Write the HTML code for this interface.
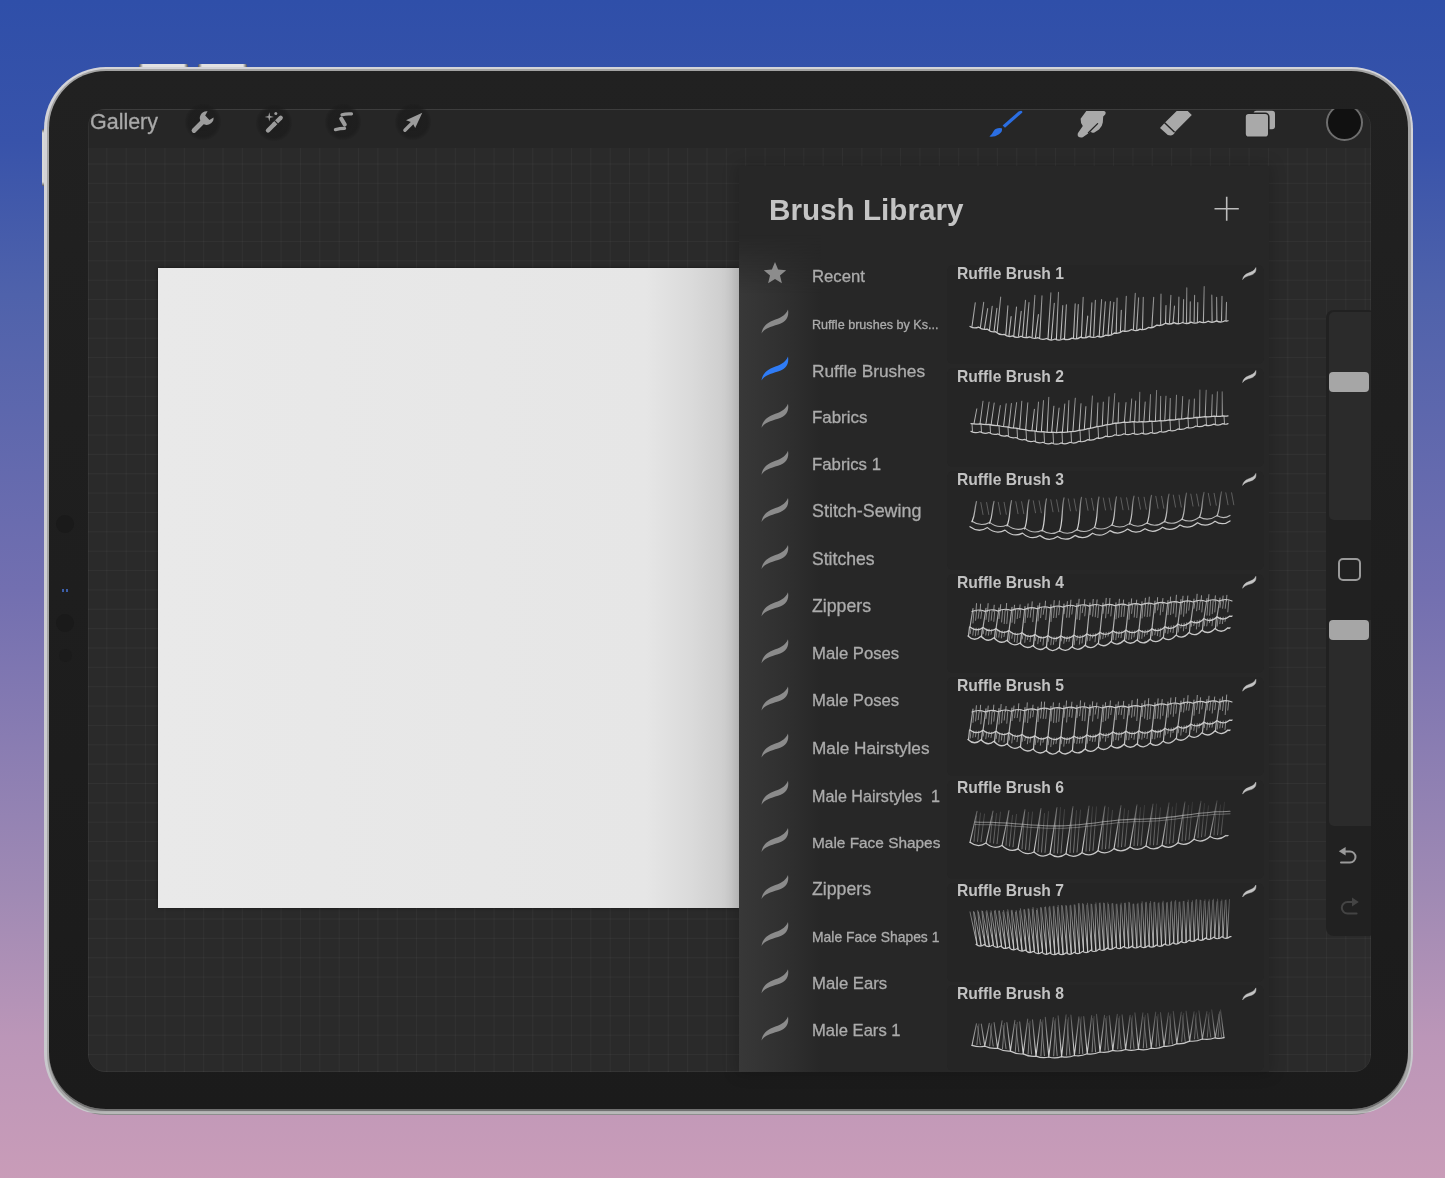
<!DOCTYPE html>
<html><head><meta charset="utf-8">
<style>
*{margin:0;padding:0;box-sizing:border-box}
html,body{width:1445px;height:1178px;overflow:hidden}
body{position:relative;font-family:"Liberation Sans",sans-serif;
background:linear-gradient(180deg,#2f4fa9 0%,#3853aa 12%,#4f62ab 25%,#726fb0 50%,#a08ab4 76%,#bb96b8 88%,#c99cb8 100%);}
.abs{position:absolute}
#frame{position:absolute;left:43.7px;top:66.5px;width:1369px;height:1048.5px;border-radius:62px;background:linear-gradient(180deg,#d4d4d8 0,#c8c8cc calc(100% - 3px),#8e8e8e calc(100% - 1.6px))}
#frame2{position:absolute;left:46.5px;top:69px;width:1364px;height:1044.5px;border-radius:59.5px;background:linear-gradient(180deg,#a3a3a3 0,#a6a6a6 calc(100% - 3px),#b8b8b8 calc(100% - 2px))}
#bezel{position:absolute;left:48.8px;top:71px;width:1359.4px;height:1038px;border-radius:57px;background:linear-gradient(180deg,#212121,#1b1b1b);box-shadow:0 2px 0 #707070}
#screen{position:absolute;left:87.7px;top:109px;width:1283px;height:963px;border-radius:17px;overflow:hidden;
background-color:#2a2a2a;
background-image:linear-gradient(90deg,rgba(255,255,255,0.035) 1.3px,transparent 1.3px),linear-gradient(180deg,rgba(255,255,255,0.035) 1.3px,transparent 1.3px);
background-size:19.37px 19.36px;background-position:-1px 15.8px}
#toolbar{position:absolute;left:0;top:0;width:1283px;height:39px;background:#262626;border-top:1px solid #333}
.ct{position:absolute;left:812px;line-height:1;color:#acacac;white-space:nowrap;will-change:transform;-webkit-text-stroke:0.3px #acacac}
.bt{position:absolute;left:957px;line-height:1;color:#c2c2c2;white-space:nowrap;font-size:15.66px;font-weight:bold;will-change:transform}
</style></head><body>
<div class="abs" style="left:138.9px;top:64.2px;width:49.4px;height:3.5px;border-radius:1.5px;background:linear-gradient(90deg,#555 0,#e2e2e2 4px,#e2e2e2 calc(100% - 4px),#555 100%)"></div>
<div class="abs" style="left:198px;top:64.2px;width:49px;height:3.5px;border-radius:1.5px;background:linear-gradient(90deg,#555 0,#e2e2e2 4px,#e2e2e2 calc(100% - 4px),#555 100%)"></div>
<div class="abs" style="left:41.9px;top:128.7px;width:3px;height:57.7px;border-radius:1.5px;background:linear-gradient(180deg,#555 0,#d8d8d8 4px,#d8d8d8 calc(100% - 4px),#555 100%)"></div>
<div id="frame"></div>
<div id="frame2"></div>
<div id="bezel"></div>
<div class="abs" style="left:56px;top:515px;width:18px;height:18px;border-radius:50%;background:#1a1a1a"></div>
<div class="abs" style="left:56px;top:614px;width:18px;height:18px;border-radius:50%;background:#1a1a1a"></div>
<div class="abs" style="left:58.5px;top:649px;width:13px;height:13px;border-radius:50%;background:#1b1b1b"></div>
<div class="abs" style="left:62px;top:588.5px;width:2px;height:3px;background:#3c5ea8"></div>
<div class="abs" style="left:65.5px;top:588.5px;width:2px;height:3px;background:#3c5ea8"></div>
<div id="screen">
  <div id="toolbar"></div>
  <div class="abs" style="left:0;top:0;width:1283px;height:963px;border-radius:16px;box-shadow:inset 0 0 0 1px rgba(255,255,255,0.05)"></div>
  <div class="abs" style="left:1238px;top:-5px;width:37px;height:37px;border-radius:50%;background:#111;border:2px solid #6e6e6e"></div>
  <!-- sidebar -->
  <div class="abs" style="left:1238px;top:201px;width:50px;height:626px;border-radius:8px;background:#212121"></div>
  <div class="abs" style="left:1241px;top:203px;width:48px;height:208px;border-radius:5px;background:#2b2b2b"></div>
  <div class="abs" style="left:1241px;top:511px;width:48px;height:206px;border-radius:5px;background:#2b2b2b"></div>
  <div class="abs" style="left:1241px;top:263px;width:40px;height:20px;border-radius:4px;background:#a6a6a6"></div>
  <div class="abs" style="left:1241px;top:511px;width:40px;height:20px;border-radius:4px;background:#a6a6a6"></div>
  <div class="abs" style="left:1250px;top:449px;width:23px;height:23px;border-radius:5px;border:2px solid #9a9a9a"></div>
</div>
<div class="abs" style="left:90px;top:111.5px;font-size:21.47px;color:#a9a9a9;line-height:1;will-change:transform;-webkit-text-stroke:0.3px #a9a9a9">Gallery</div>
<!-- canvas -->
<div class="abs" style="left:158px;top:268px;width:581px;height:640px;background:linear-gradient(90deg,#e9e9e9 0%,#e6e6e6 84%,#dadada 92%,#cdcdcd 98%,#c8c8c8 100%);box-shadow:0 0 3px rgba(0,0,0,0.5)"></div>
<!-- panel -->
<div class="abs" style="left:739px;top:166px;width:530px;height:906px;background:#272727;box-shadow:0 0 14px 2px rgba(0,0,0,0.18)"></div>
<div class="abs" style="left:739px;top:235px;width:82px;height:837px;background:linear-gradient(90deg,#383838,#2f2f2f 60%,#272727);-webkit-mask-image:linear-gradient(180deg,transparent 0,#000 60px)"></div>
<div class="abs" style="left:769px;top:194.5px;font-size:29.66px;font-weight:bold;color:#c4c4c4;line-height:1;will-change:transform">Brush Library</div>
<div class="abs" style="left:947px;top:265.1px;width:317px;height:99.0px;border-radius:6px;background:#252525"></div><div class="abs" style="left:947px;top:368.0px;width:317px;height:99.0px;border-radius:6px;background:#252525"></div><div class="abs" style="left:947px;top:470.9px;width:317px;height:99.0px;border-radius:6px;background:#252525"></div><div class="abs" style="left:947px;top:573.8px;width:317px;height:99.0px;border-radius:6px;background:#252525"></div><div class="abs" style="left:947px;top:676.7px;width:317px;height:99.0px;border-radius:6px;background:#252525"></div><div class="abs" style="left:947px;top:779.6px;width:317px;height:99.0px;border-radius:6px;background:#252525"></div><div class="abs" style="left:947px;top:882.5px;width:317px;height:99.0px;border-radius:6px;background:#252525"></div><div class="abs" style="left:947px;top:985.4px;width:317px;height:85.6px;border-radius:6px;background:#252525"></div>
<div class="ct" style="top:268.7px;font-size:16.7px">Recent</div>
<div class="ct" style="top:319.4px;font-size:12.6px">Ruffle brushes by Ks...</div>
<div class="ct" style="top:362.5px;font-size:17.3px">Ruffle Brushes</div>
<div class="ct" style="top:410.0px;font-size:16.9px">Fabrics</div>
<div class="ct" style="top:457.2px;font-size:16.8px">Fabrics 1</div>
<div class="ct" style="top:503.4px;font-size:17.9px">Stitch-Sewing</div>
<div class="ct" style="top:550.8px;font-size:17.6px">Stitches</div>
<div class="ct" style="top:597.8px;font-size:17.7px">Zippers</div>
<div class="ct" style="top:645.8px;font-size:16.7px">Male Poses</div>
<div class="ct" style="top:692.9px;font-size:16.7px">Male Poses</div>
<div class="ct" style="top:739.6px;font-size:17.2px">Male Hairstyles</div>
<div class="ct" style="top:787.7px;font-size:16.1px">Male Hairstyles&nbsp;&nbsp;1</div>
<div class="ct" style="top:835.4px;font-size:15.4px">Male Face Shapes</div>
<div class="ct" style="top:880.6px;font-size:17.7px">Zippers</div>
<div class="ct" style="top:930.9px;font-size:13.9px">Male Face Shapes 1</div>
<div class="ct" style="top:975.7px;font-size:16.7px">Male Ears</div>
<div class="ct" style="top:1022.9px;font-size:16.6px">Male Ears 1</div>
<div class="bt" style="top:265.9px">Ruffle Brush 1</div>
<div class="bt" style="top:368.8px">Ruffle Brush 2</div>
<div class="bt" style="top:471.7px">Ruffle Brush 3</div>
<div class="bt" style="top:574.6px">Ruffle Brush 4</div>
<div class="bt" style="top:677.5px">Ruffle Brush 5</div>
<div class="bt" style="top:780.4px">Ruffle Brush 6</div>
<div class="bt" style="top:883.3px">Ruffle Brush 7</div>
<div class="bt" style="top:986.2px">Ruffle Brush 8</div>
<svg class="abs" style="left:0;top:0" width="1445" height="1178" viewBox="0 0 1445 1178"><defs><radialGradient id="halo"><stop offset="0" stop-color="#1d1d1d" stop-opacity="0.85"/><stop offset="0.78" stop-color="#1d1d1d" stop-opacity="0.8"/><stop offset="1" stop-color="#1a1a1a" stop-opacity="0"/></radialGradient></defs><circle cx="203" cy="122" r="18.5" fill="url(#halo)"/><circle cx="274" cy="123" r="18.5" fill="url(#halo)"/><circle cx="343" cy="122" r="18.5" fill="url(#halo)"/><circle cx="413" cy="122" r="18.5" fill="url(#halo)"/><g fill="#9c9c9c"><path d="M194,130.5 L203,121.5" stroke="#9c9c9c" stroke-width="4.8" stroke-linecap="round"/><path d="M207.6,111.2 L205.2,115.6 L209.4,120 L213.6,117.6 A6.9,6.9 0 0 1 201.6,122.6 A6.9,6.9 0 0 1 207.6,111.2 Z"/></g><g fill="#9c9c9c"><path d="M268,130.5 L274.2,124.3" stroke="#9c9c9c" stroke-width="4.4" stroke-linecap="round"/><path d="M274.2,124.3 L280.7,117.8" stroke="#9c9c9c" stroke-width="4.4" stroke-linecap="round"/><path d="M273.4,119.4 L277.8,123.8" stroke="#262626" stroke-width="1.2"/><path d="M269.3,112.3 L270.2,116 L273.9,116.9 L270.2,117.8 L269.3,121.5 L268.4,117.8 L264.7,116.9 L268.4,116 Z"/><circle cx="275.8" cy="113.6" r="1.5"/></g><g stroke="#9c9c9c" stroke-linecap="round" fill="none"><path d="M342,114.8 Q346,113.5 351.5,113.9" stroke-width="3.2"/><path d="M341.2,118.6 L344.8,124.6" stroke-width="4"/><path d="M335.5,129.6 Q340,128.5 344.5,128.4" stroke-width="3.4"/></g><g fill="#9c9c9c"><path d="M422.3,112.7 L406,120.2 L412.3,122.6 L415.2,127.9 Z"/><path d="M404.9,130.3 L413.2,122" stroke="#9c9c9c" stroke-width="3.4" stroke-linecap="round"/></g><g fill="#2b6ee2"><path d="M1002.6,125.6 L1018.6,111.6 Q1022.6,109.6 1022.4,112.6 L1005,127.8 Z"/><path d="M1001.8,128.2 Q1003,131.5 999,134.2 Q994.5,137.2 989.4,136.6 Q992.6,133.6 993.8,130.8 Q996,127.4 1001.8,128.2 Z"/></g><path fill="#a9a9a9" d="M1086.3,111 L1104,111 Q1106.6,111.6 1105.2,114.4 L1103.2,116.6 L1102.8,122.6 Q1102.2,127 1099,129.6 L1094.4,132.4 Q1091.4,133.4 1091,131.4 L1082.8,137.2 Q1078.2,138 1077.6,135.2 Q1077.4,133 1079,131.4 L1082.8,126 Q1080.4,123 1080.6,118.8 Z"/><path d="M1097.6,123.6 L1088.4,132.8" stroke="#232323" stroke-width="1.3" stroke-linecap="round"/><path fill="#a9a9a9" d="M1176.7,111 L1187.7,111 L1191.8,115.1 L1175.4,131.6 Q1173.6,135.6 1170.4,135.6 Q1167.6,135.6 1165.6,133 L1160,127.9 L1165,122.6 Z"/><path d="M1164.4,122.4 L1174.6,132.2" stroke="#232323" stroke-width="1.4"/><rect x="1253.5" y="110.8" width="21.5" height="18.4" rx="3" fill="#a9a9a9"/><rect x="1245" y="113.2" width="23.8" height="24.1" rx="3.6" fill="#a9a9a9" stroke="#232323" stroke-width="1.6"/><g fill="none" stroke-linecap="round" stroke-width="2"><path d="M1345,851.5 L1350,851.5 A5.5,5.5 0 0 1 1350,862.5 L1341,862.5" stroke="#9a9a9a"/><path d="M1352.6,902 L1347.6,902 A5.8,5.8 0 0 0 1347.6,913.6 L1356.6,913.6" stroke="#444"/></g><path d="M1338.8,851.2 L1345.6,847 L1345.6,855.6 Z" fill="#9a9a9a"/><path d="M1358.8,902 L1352,897.6 L1352,906.4 Z" fill="#444"/><path d="M1214.5,208.8 L1238.8,208.8 M1226.7,196.8 L1226.7,220.8" stroke="#bcbcbc" stroke-width="1.6"/><path transform="translate(763,261.6)" d="M12,0.5 L15.1,8 L23.2,8.6 L17,13.8 L18.9,21.7 L12,17.4 L5.1,21.7 L7,13.8 L0.8,8.6 L8.9,8 Z" fill="#8c8c8c"/><path transform="translate(761.5,309.4)" d="M0,24 C1,17.5 5,13.5 11.5,11 C18,8.5 24,6.5 26.5,0 C27.8,7.5 24.5,12.5 16.5,15 C9,17.2 3,19 0,24 Z" fill="#8b8b8b"/><path transform="translate(761.5,356.6)" d="M0,24 C1,17.5 5,13.5 11.5,11 C18,8.5 24,6.5 26.5,0 C27.8,7.5 24.5,12.5 16.5,15 C9,17.2 3,19 0,24 Z" fill="#2f7cf6"/><path transform="translate(761.5,403.7)" d="M0,24 C1,17.5 5,13.5 11.5,11 C18,8.5 24,6.5 26.5,0 C27.8,7.5 24.5,12.5 16.5,15 C9,17.2 3,19 0,24 Z" fill="#8b8b8b"/><path transform="translate(761.5,450.8)" d="M0,24 C1,17.5 5,13.5 11.5,11 C18,8.5 24,6.5 26.5,0 C27.8,7.5 24.5,12.5 16.5,15 C9,17.2 3,19 0,24 Z" fill="#8b8b8b"/><path transform="translate(761.5,497.9)" d="M0,24 C1,17.5 5,13.5 11.5,11 C18,8.5 24,6.5 26.5,0 C27.8,7.5 24.5,12.5 16.5,15 C9,17.2 3,19 0,24 Z" fill="#8b8b8b"/><path transform="translate(761.5,545.1)" d="M0,24 C1,17.5 5,13.5 11.5,11 C18,8.5 24,6.5 26.5,0 C27.8,7.5 24.5,12.5 16.5,15 C9,17.2 3,19 0,24 Z" fill="#8b8b8b"/><path transform="translate(761.5,592.2)" d="M0,24 C1,17.5 5,13.5 11.5,11 C18,8.5 24,6.5 26.5,0 C27.8,7.5 24.5,12.5 16.5,15 C9,17.2 3,19 0,24 Z" fill="#8b8b8b"/><path transform="translate(761.5,639.3)" d="M0,24 C1,17.5 5,13.5 11.5,11 C18,8.5 24,6.5 26.5,0 C27.8,7.5 24.5,12.5 16.5,15 C9,17.2 3,19 0,24 Z" fill="#8b8b8b"/><path transform="translate(761.5,686.5)" d="M0,24 C1,17.5 5,13.5 11.5,11 C18,8.5 24,6.5 26.5,0 C27.8,7.5 24.5,12.5 16.5,15 C9,17.2 3,19 0,24 Z" fill="#8b8b8b"/><path transform="translate(761.5,733.6)" d="M0,24 C1,17.5 5,13.5 11.5,11 C18,8.5 24,6.5 26.5,0 C27.8,7.5 24.5,12.5 16.5,15 C9,17.2 3,19 0,24 Z" fill="#8b8b8b"/><path transform="translate(761.5,780.7)" d="M0,24 C1,17.5 5,13.5 11.5,11 C18,8.5 24,6.5 26.5,0 C27.8,7.5 24.5,12.5 16.5,15 C9,17.2 3,19 0,24 Z" fill="#8b8b8b"/><path transform="translate(761.5,827.9)" d="M0,24 C1,17.5 5,13.5 11.5,11 C18,8.5 24,6.5 26.5,0 C27.8,7.5 24.5,12.5 16.5,15 C9,17.2 3,19 0,24 Z" fill="#8b8b8b"/><path transform="translate(761.5,875.0)" d="M0,24 C1,17.5 5,13.5 11.5,11 C18,8.5 24,6.5 26.5,0 C27.8,7.5 24.5,12.5 16.5,15 C9,17.2 3,19 0,24 Z" fill="#8b8b8b"/><path transform="translate(761.5,922.1)" d="M0,24 C1,17.5 5,13.5 11.5,11 C18,8.5 24,6.5 26.5,0 C27.8,7.5 24.5,12.5 16.5,15 C9,17.2 3,19 0,24 Z" fill="#8b8b8b"/><path transform="translate(761.5,969.3)" d="M0,24 C1,17.5 5,13.5 11.5,11 C18,8.5 24,6.5 26.5,0 C27.8,7.5 24.5,12.5 16.5,15 C9,17.2 3,19 0,24 Z" fill="#8b8b8b"/><path transform="translate(761.5,1016.4)" d="M0,24 C1,17.5 5,13.5 11.5,11 C18,8.5 24,6.5 26.5,0 C27.8,7.5 24.5,12.5 16.5,15 C9,17.2 3,19 0,24 Z" fill="#8b8b8b"/><path transform="translate(1242.6,267.6) scale(0.5)" d="M0,24 C1,17.5 5,13.5 11.5,11 C18,8.5 24,6.5 26.5,0 C27.8,7.5 24.5,12.5 16.5,15 C9,17.2 3,19 0,24 Z" fill="#c4c4c4" stroke="#c4c4c4" stroke-width="0.9"/><path transform="translate(1242.6,370.5) scale(0.5)" d="M0,24 C1,17.5 5,13.5 11.5,11 C18,8.5 24,6.5 26.5,0 C27.8,7.5 24.5,12.5 16.5,15 C9,17.2 3,19 0,24 Z" fill="#c4c4c4" stroke="#c4c4c4" stroke-width="0.9"/><path transform="translate(1242.6,473.4) scale(0.5)" d="M0,24 C1,17.5 5,13.5 11.5,11 C18,8.5 24,6.5 26.5,0 C27.8,7.5 24.5,12.5 16.5,15 C9,17.2 3,19 0,24 Z" fill="#c4c4c4" stroke="#c4c4c4" stroke-width="0.9"/><path transform="translate(1242.6,576.3) scale(0.5)" d="M0,24 C1,17.5 5,13.5 11.5,11 C18,8.5 24,6.5 26.5,0 C27.8,7.5 24.5,12.5 16.5,15 C9,17.2 3,19 0,24 Z" fill="#c4c4c4" stroke="#c4c4c4" stroke-width="0.9"/><path transform="translate(1242.6,679.2) scale(0.5)" d="M0,24 C1,17.5 5,13.5 11.5,11 C18,8.5 24,6.5 26.5,0 C27.8,7.5 24.5,12.5 16.5,15 C9,17.2 3,19 0,24 Z" fill="#c4c4c4" stroke="#c4c4c4" stroke-width="0.9"/><path transform="translate(1242.6,782.1) scale(0.5)" d="M0,24 C1,17.5 5,13.5 11.5,11 C18,8.5 24,6.5 26.5,0 C27.8,7.5 24.5,12.5 16.5,15 C9,17.2 3,19 0,24 Z" fill="#c4c4c4" stroke="#c4c4c4" stroke-width="0.9"/><path transform="translate(1242.6,885.0) scale(0.5)" d="M0,24 C1,17.5 5,13.5 11.5,11 C18,8.5 24,6.5 26.5,0 C27.8,7.5 24.5,12.5 16.5,15 C9,17.2 3,19 0,24 Z" fill="#c4c4c4" stroke="#c4c4c4" stroke-width="0.9"/><path transform="translate(1242.6,987.9) scale(0.5)" d="M0,24 C1,17.5 5,13.5 11.5,11 C18,8.5 24,6.5 26.5,0 C27.8,7.5 24.5,12.5 16.5,15 C9,17.2 3,19 0,24 Z" fill="#c4c4c4" stroke="#c4c4c4" stroke-width="0.9"/><defs><linearGradient id="g1" gradientUnits="userSpaceOnUse" x1="0" y1="286.0" x2="0" y2="340.0"><stop offset="0" stop-color="#cfcfcf" stop-opacity="0.5"/><stop offset="1" stop-color="#cfcfcf" stop-opacity="1"/></linearGradient><linearGradient id="g2" gradientUnits="userSpaceOnUse" x1="0" y1="388.0" x2="0" y2="430.0"><stop offset="0" stop-color="#cfcfcf" stop-opacity="0.45"/><stop offset="1" stop-color="#cfcfcf" stop-opacity="1"/></linearGradient><linearGradient id="g3" gradientUnits="userSpaceOnUse" x1="0" y1="490.0" x2="0" y2="520.0"><stop offset="0" stop-color="#cfcfcf" stop-opacity="0.25"/><stop offset="1" stop-color="#cfcfcf" stop-opacity="1"/></linearGradient><linearGradient id="g4" gradientUnits="userSpaceOnUse" x1="0" y1="597.0" x2="0" y2="647.5"><stop offset="0" stop-color="#cfcfcf" stop-opacity="0.6"/><stop offset="1" stop-color="#cfcfcf" stop-opacity="1"/></linearGradient><linearGradient id="g5" gradientUnits="userSpaceOnUse" x1="0" y1="698.0" x2="0" y2="751.0"><stop offset="0" stop-color="#cfcfcf" stop-opacity="0.6"/><stop offset="1" stop-color="#cfcfcf" stop-opacity="1"/></linearGradient><linearGradient id="g6" gradientUnits="userSpaceOnUse" x1="0" y1="800.0" x2="0" y2="850.0"><stop offset="0" stop-color="#cfcfcf" stop-opacity="0.15"/><stop offset="1" stop-color="#cfcfcf" stop-opacity="1"/></linearGradient><linearGradient id="g7" gradientUnits="userSpaceOnUse" x1="0" y1="898.0" x2="0" y2="950.0"><stop offset="0" stop-color="#cfcfcf" stop-opacity="0.25"/><stop offset="1" stop-color="#cfcfcf" stop-opacity="1"/></linearGradient><linearGradient id="g8" gradientUnits="userSpaceOnUse" x1="0" y1="1008.0" x2="0" y2="1050.0"><stop offset="0" stop-color="#cfcfcf" stop-opacity="0.12"/><stop offset="1" stop-color="#cfcfcf" stop-opacity="1"/></linearGradient><filter id="soft" x="-5%" y="-20%" width="110%" height="140%"><feGaussianBlur stdDeviation="0.35"/></filter></defs><g fill="none" stroke="#c8c8c8" stroke-linecap="round" stroke-linejoin="round" filter="url(#soft)"><path d="M970.0,326.5Q974.2,329.0 978.5,327.1Q982.8,330.4 987.0,329.1Q991.2,332.8 995.5,331.7Q999.8,335.5 1004.0,334.3Q1008.2,337.6 1012.5,335.9Q1016.8,338.6 1021.0,336.2Q1025.2,338.8 1029.5,336.8Q1033.8,339.6 1038.0,337.7Q1042.2,340.5 1046.5,338.5Q1050.8,341.2 1055.0,339.0Q1059.2,341.4 1063.5,338.8Q1067.8,340.9 1072.0,338.1Q1076.2,340.0 1080.5,337.1Q1084.8,339.1 1089.0,336.4Q1093.2,338.6 1097.5,336.2Q1101.8,338.2 1106.0,335.1Q1110.2,336.5 1114.5,333.0Q1118.8,334.2 1123.0,330.8Q1127.2,332.4 1131.5,329.5Q1135.8,331.8 1140.0,329.1Q1144.2,330.8 1148.5,327.4Q1152.8,328.7 1157.0,325.1Q1161.2,326.4 1165.5,323.2Q1169.8,325.1 1174.0,322.6Q1178.2,325.0 1182.5,322.5Q1186.8,324.7 1191.0,322.1Q1195.2,324.3 1199.5,321.7Q1203.8,323.9 1208.0,321.2Q1212.2,323.4 1216.5,320.9Q1220.8,323.2 1225.0,320.7Q1226.5,321.5 1228.0,320.7" stroke-width="1.3"/><path d="M972.0,326.5 L975.3,302.7M980.4,327.5 L983.7,302.2M984.5,328.4 L987.7,308.5M989.5,329.8 L992.2,306.2M994.1,331.3 L996.9,308.3M997.1,332.2 L1000.7,297.0M1005.8,334.7 L1007.9,305.7M1009.0,335.4 L1011.1,316.6M1013.8,336.0 L1016.5,307.0M1018.5,336.2 L1021.2,311.2M1022.6,336.3 L1025.5,300.4M1026.2,336.5 L1029.0,302.6M1032.1,337.0 L1034.9,295.3M1035.5,337.4 L1038.4,314.6M1039.7,337.8 L1042.0,295.8M1048.0,338.6 L1050.9,292.7M1051.4,338.9 L1054.3,303.2M1056.4,339.0 L1058.5,292.3M1060.7,338.9 L1062.8,305.5M1064.5,338.7 L1066.4,304.7M1073.5,337.9 L1075.2,303.9M1076.6,337.6 L1078.3,304.5M1081.4,337.0 L1083.2,297.3M1085.8,336.6 L1087.7,316.1M1090.1,336.3 L1091.9,302.7M1093.7,336.2 L1095.4,300.3M1099.2,336.1 L1101.6,299.6M1103.0,335.6 L1105.4,301.7M1108.0,334.6 L1110.4,301.5M1111.5,333.8 L1113.9,302.2M1116.2,332.5 L1117.1,298.0M1120.4,331.4 L1121.3,310.2M1124.9,330.4 L1126.3,296.2M1133.4,329.4 L1135.3,293.3M1136.7,329.3 L1138.6,297.8M1142.5,328.7 L1143.3,297.2M1151.9,326.5 L1153.7,297.2M1160.6,324.2 L1161.0,294.0M1165.5,323.2 L1166.0,305.6M1169.5,322.7 L1170.9,295.3M1173.1,322.6 L1174.5,306.1M1178.4,322.6 L1178.9,297.0M1183.1,322.4 L1183.6,299.6M1186.5,322.3 L1186.8,287.7M1190.0,322.2 L1190.3,301.7M1194.1,322.0 L1194.6,295.3M1197.4,321.8 L1197.8,302.6M1203.4,321.5 L1204.2,286.5M1212.1,321.0 L1211.8,295.1M1216.9,320.9 L1216.6,297.2M1221.5,320.8 L1222.0,296.2M1226.0,320.7 L1226.5,302.4" stroke-width="1.1" stroke="url(#g1)"/><path d="M971.0,423.6Q975.5,424.4 980.0,423.8Q984.5,424.9 989.0,424.5Q993.5,425.7 998.0,425.5Q1002.5,426.9 1007.0,426.8Q1011.5,428.3 1016.0,428.2Q1020.5,429.7 1025.0,429.6Q1029.5,431.1 1034.0,430.8Q1038.5,432.1 1043.0,431.7Q1047.5,432.8 1052.0,432.2Q1056.5,433.1 1061.0,432.2Q1065.5,432.8 1070.0,431.6Q1074.5,431.8 1079.0,430.3Q1083.5,430.3 1088.0,428.6Q1092.5,428.4 1097.0,426.7Q1101.5,426.5 1106.0,424.8Q1110.5,424.8 1115.0,423.2Q1119.5,423.4 1124.0,422.1Q1128.5,422.6 1133.0,421.7Q1137.5,422.5 1142.0,421.6Q1146.5,422.2 1151.0,421.2Q1155.5,421.8 1160.0,420.7Q1164.5,421.1 1169.0,419.9Q1173.5,420.3 1178.0,419.1Q1182.5,419.4 1187.0,418.2Q1191.5,418.6 1196.0,417.4Q1200.5,417.8 1205.0,416.7Q1209.5,417.2 1214.0,416.2Q1218.5,416.8 1223.0,415.9Q1225.5,416.4 1228.0,415.9" stroke-width="1.3"/><path d="M971.0,431.4Q975.5,433.8 980.0,431.7Q984.5,434.4 989.0,432.5Q993.5,435.5 998.0,433.9Q1002.5,437.1 1007.0,435.6Q1011.5,439.0 1016.0,437.5Q1020.5,440.9 1025.0,439.4Q1029.5,442.7 1034.0,441.0Q1038.5,444.1 1043.0,442.2Q1047.5,445.0 1052.0,442.9Q1056.5,445.4 1061.0,442.9Q1065.5,445.1 1070.0,442.3Q1074.5,444.2 1079.0,441.2Q1083.5,442.8 1088.0,439.6Q1092.5,441.1 1097.0,437.9Q1101.5,439.4 1106.0,436.1Q1110.5,437.8 1115.0,434.7Q1119.5,436.5 1124.0,433.7Q1128.5,435.8 1133.0,433.3Q1137.5,435.7 1142.0,433.1Q1146.5,435.3 1151.0,432.5Q1155.5,434.5 1160.0,431.5Q1164.5,433.3 1169.0,430.3Q1173.5,432.0 1178.0,428.9Q1182.5,430.5 1187.0,427.4Q1191.5,429.1 1196.0,426.0Q1200.5,427.8 1205.0,424.9Q1209.5,426.8 1214.0,424.1Q1218.5,426.2 1223.0,423.6Q1225.5,424.9 1228.0,423.6" stroke-width="1.2"/><path d="M972.0,423.6 L972.5,431.4M981.0,423.9 L981.5,431.7M990.0,424.6 L990.5,432.6M999.0,425.6 L999.5,434.1M1008.0,427.0 L1008.5,435.8M1017.0,428.4 L1017.5,437.7M1026.0,429.8 L1026.5,439.6M1035.0,431.0 L1035.5,441.2M1044.0,431.8 L1044.5,442.3M1053.0,432.3 L1053.5,442.9M1062.0,432.2 L1062.5,442.9M1071.0,431.5 L1071.5,442.2M1080.0,430.1 L1080.5,441.0M1089.0,428.4 L1089.5,439.4M1098.0,426.5 L1098.5,437.7M1107.0,424.6 L1107.5,436.0M1116.0,423.1 L1116.5,434.6M1125.0,422.1 L1125.5,433.6M1134.0,421.7 L1134.5,433.3M1143.0,421.6 L1143.5,433.1M1152.0,421.2 L1152.5,432.4M1161.0,420.6 L1161.5,431.4M1170.0,419.8 L1170.5,430.1M1179.0,419.0 L1179.5,428.7M1188.0,418.1 L1188.5,427.2M1197.0,417.3 L1197.5,425.9M1206.0,416.6 L1206.5,424.8M1215.0,416.1 L1215.5,424.0M1224.0,415.9 L1224.5,423.6" stroke-width="1" opacity="0.8"/><path d="M974.0,423.6 L976.8,408.9M980.0,423.8 L983.0,401.2M985.9,424.2 L989.1,402.1M991.1,424.7 L994.2,403.0M997.3,425.4 L1000.3,405.6M1003.6,426.3 L1006.2,403.8M1008.8,427.1 L1011.4,403.5M1013.5,427.8 L1016.6,402.6M1019.7,428.8 L1021.8,401.2M1025.7,429.7 L1027.8,402.8M1031.9,430.6 L1034.4,409.3M1036.4,431.1 L1038.5,402.1M1041.4,431.6 L1043.5,400.6M1047.1,432.0 L1048.8,397.3M1051.7,432.2 L1053.9,406.2M1056.6,432.3 L1059.1,408.1M1062.4,432.2 L1064.8,404.0M1067.5,431.8 L1068.9,400.6M1072.9,431.2 L1075.3,398.2M1079.2,430.3 L1081.0,403.7M1084.3,429.3 L1085.9,406.6M1090.5,428.1 L1092.4,396.0M1096.9,426.7 L1097.9,402.9M1102.3,425.6 L1103.3,402.1M1107.6,424.5 L1109.0,396.9M1112.7,423.6 L1114.8,393.5M1118.1,422.8 L1118.8,402.7M1124.4,422.1 L1126.0,402.6M1130.0,421.8 L1131.7,398.9M1134.6,421.7 L1135.7,401.0M1139.1,421.7 L1139.8,392.2M1143.9,421.5 L1145.2,402.0M1149.3,421.3 L1150.5,394.6M1155.4,421.0 L1156.6,390.4M1160.3,420.6 L1160.7,396.3M1164.8,420.3 L1166.0,396.2M1169.7,419.9 L1170.3,398.4M1175.6,419.3 L1176.5,395.2M1181.6,418.7 L1182.7,396.5M1187.9,418.1 L1189.2,399.8M1193.8,417.6 L1194.4,399.0M1199.6,417.1 L1199.9,390.0M1205.2,416.7 L1206.2,390.2M1211.6,416.3 L1212.3,394.7M1216.5,416.1 L1217.4,391.8M1222.3,415.9 L1222.2,391.8" stroke-width="1" stroke="url(#g2)"/><path d="M970.0,526.7Q978.8,533.3 987.5,527.6Q996.2,535.1 1005.0,530.1Q1013.8,538.0 1022.5,533.1Q1031.2,540.9 1040.0,535.5Q1048.8,542.6 1057.5,536.4Q1066.2,542.5 1075.0,535.4Q1083.8,540.8 1092.5,533.2Q1101.2,538.2 1110.0,530.6Q1118.8,536.1 1127.5,529.1Q1136.2,535.4 1145.0,528.7Q1153.8,534.5 1162.5,527.3Q1171.2,532.6 1180.0,525.0Q1188.8,530.2 1197.5,522.7Q1206.2,528.3 1215.0,521.2Q1222.5,526.4 1230.0,520.9" stroke-width="1.25"/><path d="M972.0,521.2Q980.8,527.2 989.5,522.4Q998.2,529.1 1007.0,524.9Q1015.8,532.0 1024.5,527.9Q1033.2,534.8 1042.0,530.2Q1050.8,536.4 1059.5,530.9Q1068.2,536.1 1077.0,529.7Q1085.8,534.2 1094.5,527.4Q1103.2,531.6 1112.0,524.9Q1120.8,529.6 1129.5,523.6Q1138.2,529.1 1147.0,523.1Q1155.8,528.1 1164.5,521.5Q1173.2,526.0 1182.0,519.2Q1190.8,523.7 1199.5,517.0Q1208.2,521.8 1217.0,515.6Q1223.5,519.6 1230.0,515.4" stroke-width="1.15" opacity="0.9"/><path d="M972.0,521.8 C975.5,513.8 974.0,511.5 976.5,501.5M989.5,523.2 C993.0,515.2 991.5,511.3 994.0,501.3M1007.0,525.9 C1010.5,517.9 1009.0,510.7 1011.5,500.7M1024.5,528.9 C1028.0,520.9 1026.5,509.8 1029.0,499.8M1042.0,531.0 C1045.5,523.0 1044.0,508.8 1046.5,498.8M1059.5,531.3 C1063.0,523.3 1061.5,507.9 1064.0,497.9M1077.0,529.9 C1080.5,521.9 1079.0,507.3 1081.5,497.3M1094.5,527.4 C1098.0,519.4 1096.5,507.0 1099.0,497.0M1112.0,525.1 C1115.5,517.1 1114.0,506.8 1116.5,496.8M1129.5,524.0 C1133.0,516.0 1131.5,506.2 1134.0,496.2M1147.0,523.4 C1150.5,515.4 1149.0,505.3 1151.5,495.3M1164.5,521.7 C1168.0,513.7 1166.5,504.1 1169.0,494.1M1182.0,519.3 C1185.5,511.3 1184.0,503.1 1186.5,493.1M1199.5,517.2 C1203.0,509.2 1201.5,502.3 1204.0,492.3M1217.0,516.0 C1220.5,508.0 1219.0,501.8 1221.5,491.8" stroke-width="1.25" stroke="url(#g3)"/><path d="M980.8,502.5 L983.0,514.5M986.6,502.5 L988.8,514.5M998.3,502.3 L1000.5,514.3M1004.1,502.3 L1006.3,514.3M1015.8,501.7 L1018.0,513.7M1021.6,501.7 L1023.8,513.7M1033.3,500.8 L1035.5,512.8M1039.1,500.8 L1041.3,512.8M1050.8,499.8 L1053.0,511.8M1056.6,499.8 L1058.8,511.8M1068.3,498.9 L1070.5,510.9M1074.1,498.9 L1076.3,510.9M1085.8,498.3 L1088.0,510.3M1091.6,498.3 L1093.8,510.3M1103.3,498.0 L1105.5,510.0M1109.1,498.0 L1111.3,510.0M1120.8,497.8 L1123.0,509.8M1126.6,497.8 L1128.8,509.8M1138.3,497.2 L1140.5,509.2M1144.1,497.2 L1146.3,509.2M1155.8,496.3 L1158.0,508.3M1161.6,496.3 L1163.8,508.3M1173.3,495.1 L1175.5,507.1M1179.1,495.1 L1181.3,507.1M1190.8,494.1 L1193.0,506.1M1196.6,494.1 L1198.8,506.1M1208.3,493.3 L1210.5,505.3M1214.1,493.3 L1216.3,505.3M1225.8,492.8 L1228.0,504.8M1231.6,492.8 L1233.8,504.8" stroke-width="1" opacity="0.35"/><path d="M972.0,611.5Q978.5,608.5 985.0,611.4Q991.5,608.3 998.0,611.1Q1004.5,607.8 1011.0,610.4Q1017.5,607.1 1024.0,609.7Q1030.5,606.2 1037.0,608.8Q1043.5,605.3 1050.0,607.9Q1056.5,604.5 1063.0,607.1Q1069.5,603.8 1076.0,606.5Q1082.5,603.3 1089.0,606.1Q1095.5,603.0 1102.0,606.0Q1108.5,602.9 1115.0,605.8Q1121.5,602.7 1128.0,605.5Q1134.5,602.2 1141.0,604.9Q1147.5,601.6 1154.0,604.2Q1160.5,600.9 1167.0,603.5Q1173.5,600.1 1180.0,602.7Q1186.5,599.4 1193.0,602.0Q1199.5,598.7 1206.0,601.5Q1212.5,598.3 1219.0,601.1Q1225.5,598.0 1232.0,601.0" stroke-width="1.15"/><path d="M976.0,611.5 L976.5,603.6M980.1,611.5 L980.6,604.1M987.6,611.4 L988.1,603.6M993.7,611.2 L994.2,605.2M1000.2,611.0 L1000.7,604.6M1006.1,610.7 L1006.6,603.4M1014.0,610.3 L1014.5,605.2M1019.6,609.9 L1020.1,604.8M1027.6,609.4 L1028.1,603.9M1031.7,609.2 L1032.2,601.8M1039.3,608.6 L1039.8,603.2M1045.0,608.2 L1045.5,601.1M1053.7,607.7 L1054.2,600.6M1058.9,607.3 L1059.4,600.9M1066.9,606.9 L1067.4,601.6M1070.4,606.7 L1070.9,600.1M1078.6,606.4 L1079.1,599.2M1084.3,606.2 L1084.8,599.6M1092.7,606.0 L1093.2,599.4M1096.6,606.0 L1097.1,599.9M1105.7,606.0 L1106.2,598.3M1109.4,605.9 L1109.9,598.4M1118.9,605.8 L1119.4,599.2M1123.1,605.6 L1123.6,600.0M1131.1,605.4 L1131.6,598.8M1136.2,605.1 L1136.7,600.1M1144.9,604.7 L1145.4,598.2M1148.8,604.5 L1149.3,597.1M1157.1,604.0 L1157.6,597.6M1162.4,603.7 L1162.9,598.5M1170.1,603.3 L1170.6,597.0M1175.9,602.9 L1176.4,595.2M1182.5,602.6 L1183.0,596.2M1187.3,602.3 L1187.8,596.0M1196.6,601.9 L1197.1,594.2M1201.0,601.7 L1201.5,595.7M1208.4,601.4 L1208.9,594.6M1214.9,601.2 L1215.4,595.8M1222.6,601.1 L1223.1,596.0M1226.4,601.0 L1226.9,595.3" stroke-width="1" opacity="0.7"/><path d="M970.0,627.0Q976.5,632.3 983.0,627.4Q989.5,633.1 996.0,628.7Q1002.5,634.8 1009.0,630.6Q1015.5,636.9 1022.0,632.7Q1028.5,638.9 1035.0,634.6Q1041.5,640.5 1048.0,635.8Q1054.5,641.2 1061.0,636.0Q1067.5,640.9 1074.0,635.3Q1080.5,639.9 1087.0,634.0Q1093.5,638.4 1100.0,632.5Q1106.5,636.9 1113.0,631.0Q1119.5,635.7 1126.0,630.2Q1132.5,635.2 1139.0,629.9Q1145.5,634.7 1152.0,628.9Q1158.5,633.2 1165.0,626.9Q1171.5,630.8 1178.0,624.2Q1184.5,628.0 1191.0,621.3Q1197.5,625.2 1204.0,618.8Q1210.5,622.9 1217.0,616.9Q1223.5,621.5 1230.0,616.0Q1231.0,616.8 1232.0,616.0" stroke-width="1.3"/><path d="M968.0,636.0Q974.5,642.4 981.0,636.3Q987.5,643.3 994.0,637.8Q1000.5,645.3 1007.0,640.2Q1013.5,647.9 1020.0,642.9Q1026.5,650.6 1033.0,645.4Q1039.5,652.7 1046.0,647.0Q1052.5,653.8 1059.0,647.5Q1065.5,653.7 1072.0,646.8Q1078.5,652.5 1085.0,645.3Q1091.5,650.8 1098.0,643.4Q1104.5,648.8 1111.0,641.5Q1117.5,647.2 1124.0,640.3Q1130.5,646.4 1137.0,640.0Q1143.5,646.1 1150.0,639.2Q1156.5,644.8 1163.0,637.5Q1169.5,642.7 1176.0,635.1Q1182.5,640.2 1189.0,632.5Q1195.5,637.7 1202.0,630.2Q1208.5,635.6 1215.0,628.5Q1221.5,634.4 1228.0,627.8Q1229.0,628.8 1230.0,627.8" stroke-width="1.3"/><path d="M973.0,608.5 L970.0,627.0M969.5,627.0 L968.5,636.0M986.0,608.4 L983.0,627.5M982.5,627.5 L981.5,636.7M999.0,608.1 L996.0,628.9M995.5,628.9 L994.5,638.5M1012.0,607.4 L1009.0,630.9M1008.5,630.9 L1007.5,641.0M1025.0,606.7 L1022.0,633.0M1021.5,633.0 L1020.5,643.7M1038.0,605.8 L1035.0,634.8M1034.5,634.8 L1033.5,646.0M1051.0,604.9 L1048.0,635.9M1047.5,635.9 L1046.5,647.3M1064.0,604.1 L1061.0,635.9M1060.5,635.9 L1059.5,647.4M1077.0,603.5 L1074.0,635.1M1073.5,635.1 L1072.5,646.4M1090.0,603.1 L1087.0,633.8M1086.5,633.8 L1085.5,644.7M1103.0,603.0 L1100.0,632.2M1099.5,632.2 L1098.5,642.8M1116.0,602.8 L1113.0,630.9M1112.5,630.9 L1111.5,641.1M1129.0,602.5 L1126.0,630.1M1125.5,630.1 L1124.5,640.1M1142.0,601.9 L1139.0,629.8M1138.5,629.8 L1137.5,639.8M1155.0,601.2 L1152.0,628.6M1151.5,628.6 L1150.5,638.7M1168.0,600.5 L1165.0,626.5M1164.5,626.5 L1163.5,636.8M1181.0,599.7 L1178.0,623.8M1177.5,623.8 L1176.5,634.3M1194.0,599.0 L1191.0,620.9M1190.5,620.9 L1189.5,631.8M1207.0,598.5 L1204.0,618.4M1203.5,618.4 L1202.5,629.6M1220.0,598.1 L1217.0,616.7M1216.5,616.7 L1215.5,628.2" stroke-width="1.2" stroke="url(#g4)"/><path d="M974.0,610.5 L973.0,623.0M971.0,628.0 L970.2,633.6M976.6,610.5 L975.6,620.3M973.6,628.1 L972.8,635.2M979.2,610.5 L978.2,618.3M976.2,628.2 L975.4,635.8M981.8,610.5 L980.8,618.4M978.8,628.3 L978.0,634.8M987.0,610.4 L986.0,619.4M984.0,628.7 L983.2,633.7M989.6,610.3 L988.6,621.6M986.6,628.9 L985.8,635.1M992.2,610.2 L991.2,620.3M989.2,629.2 L988.4,635.3M994.8,610.2 L993.8,621.4M991.8,629.5 L991.0,634.3M1000.0,610.0 L999.0,618.6M997.0,630.2 L996.2,637.4M1002.6,609.9 L1001.6,622.0M999.6,630.6 L998.8,637.2M1005.2,609.7 L1004.2,623.6M1002.2,631.0 L1001.4,638.0M1007.8,609.6 L1006.8,623.5M1004.8,631.4 L1004.0,636.6M1013.0,609.3 L1012.0,622.3M1010.0,632.3 L1009.2,640.3M1015.6,609.2 L1014.6,623.4M1012.6,632.7 L1011.8,638.3M1018.2,609.0 L1017.2,618.6M1015.2,633.1 L1014.4,641.7M1020.8,608.9 L1019.8,617.6M1017.8,633.5 L1017.0,642.5M1026.0,608.5 L1025.0,622.6M1023.0,634.4 L1022.2,639.0M1028.6,608.4 L1027.6,617.3M1025.6,634.7 L1024.8,642.4M1031.2,608.2 L1030.2,617.3M1028.2,635.1 L1027.4,639.6M1033.8,608.0 L1032.8,621.7M1030.8,635.4 L1030.0,641.6M1039.0,607.6 L1038.0,621.0M1036.0,636.0 L1035.2,640.7M1041.6,607.5 L1040.6,617.7M1038.6,636.3 L1037.8,643.7M1044.2,607.3 L1043.2,614.4M1041.2,636.5 L1040.4,641.5M1046.8,607.1 L1045.8,619.6M1043.8,636.7 L1043.0,645.2M1052.0,606.8 L1051.0,621.5M1049.0,636.9 L1048.2,641.5M1054.6,606.6 L1053.6,617.6M1051.6,637.0 L1050.8,644.8M1057.2,606.4 L1056.2,617.5M1054.2,637.0 L1053.4,644.4M1059.8,606.3 L1058.8,614.8M1056.8,637.0 L1056.0,641.3M1065.0,606.0 L1064.0,613.8M1062.0,636.8 L1061.2,641.0M1067.6,605.9 L1066.6,617.3M1064.6,636.7 L1063.8,643.3M1070.2,605.7 L1069.2,617.3M1067.2,636.6 L1066.4,641.3M1072.8,605.6 L1071.8,614.1M1069.8,636.4 L1069.0,641.4M1078.0,605.4 L1077.0,619.1M1075.0,636.0 L1074.2,644.9M1080.6,605.3 L1079.6,619.7M1077.6,635.7 L1076.8,640.2M1083.2,605.2 L1082.2,612.7M1080.2,635.4 L1079.4,644.2M1085.8,605.2 L1084.8,615.9M1082.8,635.2 L1082.0,643.0M1091.0,605.1 L1090.0,614.7M1088.0,634.5 L1087.2,640.9M1093.6,605.0 L1092.6,616.2M1090.6,634.2 L1089.8,640.4M1096.2,605.0 L1095.2,616.8M1093.2,633.9 L1092.4,638.0M1098.8,605.0 L1097.8,617.6M1095.8,633.6 L1095.0,641.8M1104.0,605.0 L1103.0,613.4M1101.0,633.0 L1100.2,639.3M1106.6,605.0 L1105.6,617.9M1103.6,632.7 L1102.8,638.7M1109.2,604.9 L1108.2,613.5M1106.2,632.4 L1105.4,637.2M1111.8,604.9 L1110.8,616.0M1108.8,632.1 L1108.0,636.2M1117.0,604.8 L1116.0,618.9M1114.0,631.7 L1113.2,639.7M1119.6,604.7 L1118.6,617.4M1116.6,631.5 L1115.8,639.8M1122.2,604.7 L1121.2,616.7M1119.2,631.3 L1118.4,637.4M1124.8,604.6 L1123.8,616.4M1121.8,631.2 L1121.0,637.7M1130.0,604.4 L1129.0,619.3M1127.0,631.0 L1126.2,639.1M1132.6,604.3 L1131.6,613.4M1129.6,631.0 L1128.8,639.6M1135.2,604.2 L1134.2,617.1M1132.2,631.0 L1131.4,638.9M1137.8,604.1 L1136.8,617.6M1134.8,630.9 L1134.0,637.0M1143.0,603.8 L1142.0,618.0M1140.0,630.7 L1139.2,639.1M1145.6,603.7 L1144.6,616.2M1142.6,630.5 L1141.8,638.4M1148.2,603.5 L1147.2,616.7M1145.2,630.3 L1144.4,636.3M1150.8,603.4 L1149.8,616.2M1147.8,630.0 L1147.0,634.4M1156.0,603.1 L1155.0,612.8M1153.0,629.4 L1152.2,635.7M1158.6,603.0 L1157.6,610.0M1155.6,629.0 L1154.8,634.8M1161.2,602.8 L1160.2,614.9M1158.2,628.6 L1157.4,635.7M1163.8,602.7 L1162.8,611.5M1160.8,628.1 L1160.0,636.8M1169.0,602.4 L1168.0,614.7M1166.0,627.1 L1165.2,632.8M1171.6,602.2 L1170.6,614.5M1168.6,626.6 L1167.8,633.4M1174.2,602.0 L1173.2,613.3M1171.2,626.0 L1170.4,632.0M1176.8,601.9 L1175.8,616.9M1173.8,625.5 L1173.0,632.7M1182.0,601.6 L1181.0,614.2M1179.0,624.3 L1178.2,632.1M1184.6,601.5 L1183.6,616.3M1181.6,623.8 L1180.8,627.9M1187.2,601.3 L1186.2,613.2M1184.2,623.2 L1183.4,630.9M1189.8,601.2 L1188.8,610.2M1186.8,622.6 L1186.0,628.6M1195.0,600.9 L1194.0,608.3M1192.0,621.5 L1191.2,626.5M1197.6,600.8 L1196.6,610.8M1194.6,621.0 L1193.8,625.5M1200.2,600.7 L1199.2,609.7M1197.2,620.5 L1196.4,629.0M1202.8,600.6 L1201.8,612.0M1199.8,620.0 L1199.0,626.5M1208.0,600.4 L1207.0,615.2M1205.0,619.1 L1204.2,625.9M1210.6,600.3 L1209.6,615.3M1207.6,618.7 L1206.8,625.9M1213.2,600.3 L1212.2,613.7M1210.2,618.3 L1209.4,622.7M1215.8,600.2 L1214.8,612.0M1212.8,618.0 L1212.0,625.8M1221.0,600.1 L1220.0,607.5M1218.0,617.5 L1217.2,626.2M1223.6,600.1 L1222.6,608.3M1220.6,617.3 L1219.8,623.7M1226.2,600.0 L1225.2,608.4M1223.2,617.2 L1222.4,623.6M1228.8,600.0 L1227.8,611.9M1225.8,617.1 L1225.0,621.4" stroke-width="1" opacity="0.6"/><path d="M972.0,712.0Q978.5,709.0 985.0,711.9Q991.5,708.8 998.0,711.7Q1004.5,708.5 1011.0,711.2Q1017.5,708.0 1024.0,710.7Q1030.5,707.4 1037.0,710.0Q1043.5,706.7 1050.0,709.4Q1056.5,706.1 1063.0,708.8Q1069.5,705.6 1076.0,708.4Q1082.5,705.2 1089.0,708.1Q1095.5,705.0 1102.0,708.0Q1108.5,704.9 1115.0,707.8Q1121.5,704.6 1128.0,707.4Q1134.5,704.1 1141.0,706.7Q1147.5,703.3 1154.0,705.9Q1160.5,702.4 1167.0,705.0Q1173.5,701.5 1180.0,704.1Q1186.5,700.6 1193.0,703.2Q1199.5,699.9 1206.0,702.6Q1212.5,699.3 1219.0,702.2Q1225.5,699.0 1232.0,702.0" stroke-width="1.15"/><path d="M975.9,712.0 L976.4,705.7M980.1,712.0 L980.6,705.2M987.7,711.9 L988.2,706.0M993.3,711.8 L993.8,705.1M1000.6,711.6 L1001.1,704.5M1005.6,711.4 L1006.1,706.4M1013.5,711.1 L1014.0,706.0M1018.3,710.9 L1018.8,703.7M1026.8,710.5 L1027.3,702.8M1032.5,710.3 L1033.0,705.1M1041.0,709.8 L1041.5,702.0M1044.1,709.7 L1044.6,702.0M1052.9,709.2 L1053.4,702.8M1058.9,709.0 L1059.4,703.2M1066.0,708.7 L1066.5,700.9M1071.4,708.5 L1071.9,702.1M1080.0,708.2 L1080.5,700.8M1084.2,708.2 L1084.7,702.8M1092.2,708.0 L1092.7,701.7M1096.4,708.0 L1096.9,702.9M1105.1,708.0 L1105.6,702.6M1109.9,707.9 L1110.4,700.9M1117.9,707.7 L1118.4,701.9M1123.2,707.6 L1123.7,701.3M1131.6,707.2 L1132.1,700.6M1137.0,706.9 L1137.5,699.1M1144.5,706.5 L1145.0,700.8M1148.2,706.3 L1148.7,698.6M1157.6,705.6 L1158.1,698.8M1161.7,705.3 L1162.2,699.5M1170.4,704.7 L1170.9,698.0M1175.2,704.4 L1175.7,697.5M1183.5,703.8 L1184.0,698.3M1187.5,703.6 L1188.0,695.6M1196.8,703.0 L1197.3,695.4M1200.1,702.9 L1200.6,697.7M1208.5,702.5 L1209.0,696.2M1214.2,702.3 L1214.7,697.0M1222.1,702.1 L1222.6,696.9M1226.2,702.0 L1226.7,695.0" stroke-width="1" opacity="0.7"/><path d="M970.0,730.0Q976.5,735.2 983.0,730.3Q989.5,735.9 996.0,731.3Q1002.5,737.2 1009.0,732.8Q1015.5,738.8 1022.0,734.5Q1028.5,740.4 1035.0,735.9Q1041.5,741.6 1048.0,736.8Q1054.5,742.2 1061.0,737.0Q1067.5,741.9 1074.0,736.3Q1080.5,740.9 1087.0,735.0Q1093.5,739.4 1100.0,733.5Q1106.5,737.9 1113.0,732.0Q1119.5,736.7 1126.0,731.2Q1132.5,736.2 1139.0,730.9Q1145.5,735.8 1152.0,730.1Q1158.5,734.6 1165.0,728.5Q1171.5,732.7 1178.0,726.5Q1184.5,730.5 1191.0,724.2Q1197.5,728.3 1204.0,722.2Q1210.5,726.5 1217.0,720.7Q1223.5,725.4 1230.0,720.0Q1231.0,720.8 1232.0,720.0" stroke-width="1.3"/><path d="M968.0,739.5Q974.5,745.9 981.0,739.8Q987.5,746.8 994.0,741.3Q1000.5,748.8 1007.0,743.7Q1013.5,751.4 1020.0,746.4Q1026.5,754.1 1033.0,748.9Q1039.5,756.2 1046.0,750.5Q1052.5,757.3 1059.0,751.0Q1065.5,757.2 1072.0,750.4Q1078.5,756.1 1085.0,749.0Q1091.5,754.5 1098.0,747.1Q1104.5,752.6 1111.0,745.4Q1117.5,751.2 1124.0,744.3Q1130.5,750.4 1137.0,744.0Q1143.5,750.1 1150.0,743.1Q1156.5,748.6 1163.0,741.1Q1169.5,746.2 1176.0,738.4Q1182.5,743.3 1189.0,735.4Q1195.5,740.4 1202.0,732.7Q1208.5,738.1 1215.0,730.8Q1221.5,736.7 1228.0,730.0Q1229.0,731.0 1230.0,730.0" stroke-width="1.3"/><path d="M973.0,709.0 L970.0,730.0M969.5,730.0 L968.5,739.5M986.0,708.9 L983.0,730.4M982.5,730.4 L981.5,740.2M999.0,708.7 L996.0,731.5M995.5,731.5 L994.5,742.0M1012.0,708.2 L1009.0,733.0M1008.5,733.0 L1007.5,744.5M1025.0,707.7 L1022.0,734.7M1021.5,734.7 L1020.5,747.2M1038.0,707.0 L1035.0,736.1M1034.5,736.1 L1033.5,749.5M1051.0,706.4 L1048.0,736.9M1047.5,736.9 L1046.5,750.8M1064.0,705.8 L1061.0,736.9M1060.5,736.9 L1059.5,750.9M1077.0,705.4 L1074.0,736.1M1073.5,736.1 L1072.5,750.0M1090.0,705.1 L1087.0,734.8M1086.5,734.8 L1085.5,748.4M1103.0,705.0 L1100.0,733.2M1099.5,733.2 L1098.5,746.6M1116.0,704.8 L1113.0,731.9M1112.5,731.9 L1111.5,745.0M1129.0,704.4 L1126.0,731.1M1125.5,731.1 L1124.5,744.1M1142.0,703.7 L1139.0,730.9M1138.5,730.9 L1137.5,743.8M1155.0,702.9 L1152.0,729.9M1151.5,729.9 L1150.5,742.6M1168.0,702.0 L1165.0,728.2M1164.5,728.2 L1163.5,740.3M1181.0,701.1 L1178.0,726.1M1177.5,726.1 L1176.5,737.5M1194.0,700.2 L1191.0,723.9M1190.5,723.9 L1189.5,734.5M1207.0,699.6 L1204.0,721.9M1203.5,721.9 L1202.5,732.1M1220.0,699.2 L1217.0,720.5M1216.5,720.5 L1215.5,730.4" stroke-width="1.2" stroke="url(#g5)"/><path d="M974.0,711.0 L973.0,722.4M971.0,731.0 L970.2,738.2M976.6,711.0 L975.6,721.0M973.6,731.1 L972.8,737.4M979.2,711.0 L978.2,719.7M976.2,731.1 L975.4,736.8M981.8,711.0 L980.8,723.9M978.8,731.2 L978.0,739.4M987.0,710.9 L986.0,718.5M984.0,731.5 L983.2,736.1M989.6,710.9 L988.6,724.3M986.6,731.7 L985.8,738.8M992.2,710.8 L991.2,724.0M989.2,731.9 L988.4,737.0M994.8,710.8 L993.8,721.2M991.8,732.2 L991.0,737.5M1000.0,710.6 L999.0,724.1M997.0,732.7 L996.2,738.6M1002.6,710.5 L1001.6,722.8M999.6,733.0 L998.8,742.0M1005.2,710.5 L1004.2,720.1M1002.2,733.3 L1001.4,740.1M1007.8,710.4 L1006.8,723.3M1004.8,733.6 L1004.0,742.2M1013.0,710.2 L1012.0,720.6M1010.0,734.3 L1009.2,740.2M1015.6,710.0 L1014.6,717.8M1012.6,734.6 L1011.8,743.0M1018.2,709.9 L1017.2,717.6M1015.2,735.0 L1014.4,739.4M1020.8,709.8 L1019.8,721.3M1017.8,735.3 L1017.0,741.7M1026.0,709.6 L1025.0,722.1M1023.0,735.9 L1022.2,741.4M1028.6,709.4 L1027.6,722.6M1025.6,736.2 L1024.8,740.6M1031.2,709.3 L1030.2,718.0M1028.2,736.5 L1027.4,743.8M1033.8,709.2 L1032.8,716.8M1030.8,736.8 L1030.0,742.3M1039.0,708.9 L1038.0,721.7M1036.0,737.3 L1035.2,744.7M1041.6,708.8 L1040.6,718.1M1038.6,737.4 L1037.8,742.2M1044.2,708.7 L1043.2,718.5M1041.2,737.6 L1040.4,745.2M1046.8,708.5 L1045.8,718.5M1043.8,737.8 L1043.0,742.3M1052.0,708.3 L1051.0,721.0M1049.0,737.9 L1048.2,744.8M1054.6,708.2 L1053.6,722.5M1051.6,738.0 L1050.8,746.7M1057.2,708.0 L1056.2,722.4M1054.2,738.0 L1053.4,744.2M1059.8,707.9 L1058.8,721.4M1056.8,738.0 L1056.0,743.5M1065.0,707.7 L1064.0,717.3M1062.0,737.8 L1061.2,743.8M1067.6,707.6 L1066.6,722.1M1064.6,737.7 L1063.8,746.2M1070.2,707.5 L1069.2,716.5M1067.2,737.6 L1066.4,743.4M1072.8,707.4 L1071.8,717.4M1069.8,737.4 L1069.0,743.2M1078.0,707.3 L1077.0,717.5M1075.0,737.0 L1074.2,742.9M1080.6,707.2 L1079.6,715.8M1077.6,736.7 L1076.8,743.5M1083.2,707.2 L1082.2,720.6M1080.2,736.4 L1079.4,743.1M1085.8,707.1 L1084.8,720.8M1082.8,736.2 L1082.0,743.0M1091.0,707.1 L1090.0,715.5M1088.0,735.5 L1087.2,743.3M1093.6,707.0 L1092.6,721.1M1090.6,735.2 L1089.8,740.6M1096.2,707.0 L1095.2,714.2M1093.2,734.9 L1092.4,741.5M1098.8,707.0 L1097.8,718.4M1095.8,734.6 L1095.0,741.4M1104.0,707.0 L1103.0,721.7M1101.0,734.0 L1100.2,741.2M1106.6,707.0 L1105.6,720.4M1103.6,733.7 L1102.8,738.0M1109.2,706.9 L1108.2,718.3M1106.2,733.4 L1105.4,741.3M1111.8,706.9 L1110.8,714.6M1108.8,733.1 L1108.0,737.6M1117.0,706.8 L1116.0,719.7M1114.0,732.7 L1113.2,741.2M1119.6,706.7 L1118.6,714.4M1116.6,732.5 L1115.8,739.7M1122.2,706.6 L1121.2,714.7M1119.2,732.3 L1118.4,740.1M1124.8,706.5 L1123.8,718.7M1121.8,732.2 L1121.0,737.4M1130.0,706.3 L1129.0,715.0M1127.0,732.0 L1126.2,739.9M1132.6,706.2 L1131.6,717.3M1129.6,732.0 L1128.8,739.8M1135.2,706.0 L1134.2,716.2M1132.2,732.0 L1131.4,737.7M1137.8,705.9 L1136.8,720.6M1134.8,732.0 L1134.0,739.3M1143.0,705.6 L1142.0,716.5M1140.0,731.8 L1139.2,738.5M1145.6,705.4 L1144.6,718.2M1142.6,731.6 L1141.8,739.2M1148.2,705.3 L1147.2,719.6M1145.2,731.5 L1144.4,737.5M1150.8,705.1 L1149.8,718.7M1147.8,731.2 L1147.0,738.6M1156.0,704.7 L1155.0,718.6M1153.0,730.7 L1152.2,738.7M1158.6,704.6 L1157.6,718.2M1155.6,730.4 L1154.8,738.9M1161.2,704.4 L1160.2,719.0M1158.2,730.1 L1157.4,737.3M1163.8,704.2 L1162.8,715.4M1160.8,729.7 L1160.0,737.3M1169.0,703.8 L1168.0,717.2M1166.0,728.9 L1165.2,735.1M1171.6,703.6 L1170.6,714.0M1168.6,728.5 L1167.8,733.3M1174.2,703.5 L1173.2,716.4M1171.2,728.1 L1170.4,737.1M1176.8,703.3 L1175.8,713.3M1173.8,727.7 L1173.0,732.5M1182.0,702.9 L1181.0,711.6M1179.0,726.8 L1178.2,732.9M1184.6,702.8 L1183.6,712.1M1181.6,726.3 L1180.8,735.2M1187.2,702.6 L1186.2,710.1M1184.2,725.9 L1183.4,731.4M1189.8,702.4 L1188.8,710.3M1186.8,725.4 L1186.0,732.6M1195.0,702.1 L1194.0,715.3M1192.0,724.5 L1191.2,729.4M1197.6,702.0 L1196.6,709.5M1194.6,724.1 L1193.8,730.4M1200.2,701.9 L1199.2,713.5M1197.2,723.7 L1196.4,732.3M1202.8,701.7 L1201.8,709.0M1199.8,723.3 L1199.0,727.9M1208.0,701.5 L1207.0,710.0M1205.0,722.6 L1204.2,727.7M1210.6,701.4 L1209.6,710.3M1207.6,722.3 L1206.8,729.9M1213.2,701.3 L1212.2,713.1M1210.2,722.1 L1209.4,727.2M1215.8,701.2 L1214.8,709.7M1212.8,721.8 L1212.0,727.2M1221.0,701.1 L1220.0,709.5M1218.0,721.4 L1217.2,729.2M1223.6,701.1 L1222.6,710.6M1220.6,721.2 L1219.8,728.0M1226.2,701.0 L1225.2,714.6M1223.2,721.1 L1222.4,727.5M1228.8,701.0 L1227.8,710.1M1225.8,721.0 L1225.0,729.5" stroke-width="1" opacity="0.6"/><path d="M975.0,822.0Q983.0,822.4 991.0,822.2Q999.0,822.9 1007.0,823.0Q1015.0,824.0 1023.0,824.2Q1031.0,825.2 1039.0,825.3Q1047.0,826.0 1055.0,825.8Q1063.0,826.1 1071.0,825.3Q1079.0,825.1 1087.0,823.8Q1095.0,823.2 1103.0,821.8Q1111.0,821.3 1119.0,820.0Q1127.0,819.8 1135.0,819.1Q1143.0,819.4 1151.0,818.7Q1159.0,818.6 1167.0,817.4Q1175.0,816.9 1183.0,815.4Q1191.0,814.7 1199.0,813.3Q1207.0,812.9 1215.0,811.8Q1222.5,811.8 1230.0,811.3" stroke-width="1.1" opacity="0.6"/><path d="M975.0,824.5Q983.0,824.9 991.0,824.7Q999.0,825.4 1007.0,825.5Q1015.0,826.5 1023.0,826.7Q1031.0,827.7 1039.0,827.8Q1047.0,828.5 1055.0,828.3Q1063.0,828.6 1071.0,827.8Q1079.0,827.6 1087.0,826.3Q1095.0,825.7 1103.0,824.3Q1111.0,823.8 1119.0,822.5Q1127.0,822.3 1135.0,821.6Q1143.0,821.9 1151.0,821.2Q1159.0,821.1 1167.0,819.9Q1175.0,819.4 1183.0,817.9Q1191.0,817.2 1199.0,815.8Q1207.0,815.4 1215.0,814.3Q1222.5,814.3 1230.0,813.8" stroke-width="1.0" opacity="0.4"/><path d="M970.0,842.3Q978.0,848.4 986.0,843.1Q994.0,850.1 1002.0,845.5Q1010.0,853.2 1018.0,848.9Q1026.0,856.6 1034.0,852.0Q1042.0,859.1 1050.0,853.8Q1058.0,860.0 1066.0,853.8Q1074.0,859.4 1082.0,852.7Q1090.0,857.8 1098.0,850.7Q1106.0,855.7 1114.0,848.6Q1122.0,853.7 1130.0,846.9Q1138.0,852.3 1146.0,846.0Q1154.0,851.9 1162.0,845.4Q1170.0,850.3 1178.0,842.8Q1186.0,847.1 1194.0,839.3Q1202.0,843.8 1210.0,836.5Q1218.0,841.7 1226.0,835.5Q1227.0,836.2 1228.0,835.5" stroke-width="1.25"/><path d="M970.0,842.3 L977.0,811.3M986.0,843.1 L993.0,811.1M1002.0,845.5 L1009.0,810.6M1018.0,848.9 L1025.0,809.7M1034.0,852.0 L1041.0,808.6M1050.0,853.8 L1057.0,807.5M1066.0,853.8 L1073.0,806.6M1082.0,852.7 L1089.0,806.1M1098.0,850.7 L1105.0,806.0M1114.0,848.6 L1121.0,805.6M1130.0,846.9 L1137.0,804.9M1146.0,846.0 L1153.0,804.0M1162.0,845.4 L1169.0,802.9M1178.0,842.8 L1185.0,801.9M1194.0,839.3 L1201.0,801.2M1210.0,836.5 L1217.0,800.8" stroke-width="1.15" stroke="url(#g6)"/><path d="M974.0,841.3 L976.5,815.9M977.5,841.4 L980.5,813.0M981.0,841.6 L984.5,814.0M990.0,842.5 L992.5,816.0M993.5,843.1 L996.5,813.5M997.0,843.6 L1000.5,812.1M1006.0,845.3 L1008.5,811.0M1009.5,846.1 L1012.5,815.3M1013.0,846.8 L1016.5,814.4M1022.0,848.8 L1024.5,811.8M1025.5,849.5 L1028.5,812.3M1029.0,850.1 L1032.5,812.0M1038.0,851.6 L1040.5,810.2M1041.5,852.1 L1044.5,813.5M1045.0,852.4 L1048.5,811.6M1054.0,853.0 L1056.5,808.9M1057.5,853.0 L1060.5,807.5M1061.0,853.0 L1064.5,809.6M1070.0,852.6 L1072.5,808.6M1073.5,852.4 L1076.5,810.6M1077.0,852.1 L1080.5,810.0M1086.0,851.2 L1088.5,809.2M1089.5,850.8 L1092.5,806.9M1093.0,850.4 L1096.5,806.8M1102.0,849.2 L1104.5,807.6M1105.5,848.7 L1108.5,807.3M1109.0,848.3 L1112.5,810.3M1118.0,847.1 L1120.5,808.3M1121.5,846.7 L1124.5,808.8M1125.0,846.3 L1128.5,810.5M1134.0,845.6 L1136.5,806.4M1137.5,845.4 L1140.5,807.6M1141.0,845.2 L1144.5,805.5M1150.0,845.0 L1152.5,808.0M1153.5,844.9 L1156.5,804.0M1157.0,844.8 L1160.5,807.8M1166.0,843.9 L1168.5,807.3M1169.5,843.3 L1172.5,807.0M1173.0,842.7 L1176.5,803.1M1182.0,840.9 L1184.5,803.5M1185.5,840.2 L1188.5,805.5M1189.0,839.4 L1192.5,802.2M1198.0,837.5 L1200.5,803.7M1201.5,836.8 L1204.5,803.5M1205.0,836.2 L1208.5,805.8M1214.0,835.0 L1216.5,803.7M1217.5,834.8 L1220.5,805.0M1221.0,834.6 L1224.5,802.2" stroke-width="0.9" stroke="url(#g6)" opacity="0.55"/><path d="M976.0,944.3Q980.1,947.9 984.2,944.5Q988.3,948.3 992.4,945.1Q996.5,949.1 1000.6,946.0Q1004.7,950.2 1008.8,947.3Q1012.9,951.6 1017.0,948.6Q1021.1,952.9 1025.2,950.0Q1029.3,954.3 1033.4,951.3Q1037.5,955.4 1041.6,952.2Q1045.7,956.2 1049.8,952.8Q1053.9,956.6 1058.0,953.0Q1062.1,956.5 1066.2,952.8Q1070.3,956.1 1074.4,952.2Q1078.5,955.4 1082.6,951.3Q1086.7,954.4 1090.8,950.2Q1094.9,953.3 1099.0,949.1Q1103.1,952.2 1107.2,948.0Q1111.3,951.2 1115.4,947.1Q1119.5,950.4 1123.6,946.5Q1127.7,949.9 1131.8,946.2Q1135.9,949.8 1140.0,946.1Q1144.1,949.5 1148.2,945.7Q1152.3,949.0 1156.4,945.0Q1160.5,948.1 1164.6,944.0Q1168.7,947.0 1172.8,942.8Q1176.9,945.8 1181.0,941.5Q1185.1,944.5 1189.2,940.2Q1193.3,943.2 1197.4,939.0Q1201.5,942.1 1205.6,938.0Q1209.7,941.1 1213.8,937.2Q1217.9,940.5 1222.0,936.7Q1226.1,940.1 1230.2,936.5Q1230.6,936.9 1231.0,936.5" stroke-width="1.15"/><path d="M977.0,944.3 L970.0,911.9M977.0,944.3 L973.5,911.6M981.1,945.6 L974.2,912.1M981.1,945.6 L977.7,910.6M985.2,944.5 L978.4,912.0M985.2,944.5 L981.9,910.9M989.3,946.0 L982.6,911.4M989.3,946.0 L986.1,911.9M993.4,945.2 L986.8,910.6M993.4,945.2 L990.3,912.8M997.5,946.8 L991.0,910.9M997.5,946.8 L994.5,911.2M1001.6,946.2 L995.2,910.3M1001.6,946.2 L998.7,911.1M1005.7,948.0 L999.4,910.9M1005.7,948.0 L1002.9,912.2M1009.8,947.4 L1003.6,910.5M1009.8,947.4 L1007.1,911.9M1013.9,949.3 L1007.8,909.8M1013.9,949.3 L1011.3,910.8M1018.0,948.8 L1012.0,910.2M1018.0,948.8 L1015.5,912.2M1022.1,950.7 L1016.2,910.6M1022.1,950.7 L1019.7,910.9M1026.2,950.2 L1020.4,908.7M1026.2,950.2 L1023.9,909.8M1030.3,952.0 L1024.6,909.7M1030.3,952.0 L1028.1,909.0M1034.4,951.4 L1028.8,909.0M1034.4,951.4 L1032.3,909.2M1038.5,953.1 L1033.0,907.5M1038.5,953.1 L1036.5,910.4M1042.6,952.3 L1037.1,908.6M1042.6,952.3 L1040.6,907.6M1046.7,953.8 L1041.3,907.8M1046.7,953.8 L1044.8,907.4M1050.8,952.9 L1045.5,906.9M1050.8,952.9 L1049.0,907.7M1054.9,954.2 L1049.7,906.3M1054.9,954.2 L1053.2,906.7M1059.0,953.0 L1053.9,906.1M1059.0,953.0 L1057.4,907.3M1063.1,954.1 L1058.1,905.4M1063.1,954.1 L1061.6,905.5M1067.2,952.7 L1062.3,905.9M1067.2,952.7 L1065.8,905.5M1071.3,953.6 L1066.5,906.0M1071.3,953.6 L1070.0,905.8M1075.4,952.1 L1070.7,905.2M1075.4,952.1 L1074.2,904.8M1079.5,952.9 L1074.9,905.1M1079.5,952.9 L1078.4,903.7M1083.6,951.2 L1079.1,903.5M1083.6,951.2 L1082.6,903.5M1087.7,951.9 L1083.3,904.3M1087.7,951.9 L1086.8,905.1M1091.8,950.1 L1087.5,903.2M1091.8,950.1 L1091.0,904.0M1095.9,950.7 L1091.7,904.4M1095.9,950.7 L1095.2,904.5M1100.0,949.0 L1095.9,902.8M1100.0,949.0 L1099.4,903.3M1104.1,949.6 L1100.1,902.9M1104.1,949.6 L1103.6,903.0M1108.2,947.9 L1104.3,903.4M1108.2,947.9 L1107.8,902.8M1112.3,948.6 L1108.5,904.4M1112.3,948.6 L1112.0,903.8M1116.4,947.0 L1112.7,903.5M1116.4,947.0 L1116.2,904.5M1120.5,947.9 L1116.9,904.0M1120.5,947.9 L1120.4,904.9M1124.6,946.4 L1121.1,903.1M1124.6,946.4 L1124.6,903.3M1128.7,947.5 L1125.3,903.1M1128.7,947.5 L1128.8,902.3M1132.8,946.2 L1129.5,902.9M1132.8,946.2 L1133.0,904.2M1136.9,947.4 L1133.7,904.0M1136.9,947.4 L1137.2,904.4M1141.0,946.1 L1137.9,903.2M1141.0,946.1 L1141.4,903.7M1145.1,947.1 L1142.1,901.7M1145.1,947.1 L1145.6,902.7M1149.2,945.6 L1146.3,902.2M1149.2,945.6 L1149.8,903.5M1153.3,946.5 L1150.5,901.5M1153.3,946.5 L1154.0,902.5M1157.4,944.8 L1154.7,902.2M1157.4,944.8 L1158.2,903.5M1161.5,945.6 L1158.9,902.6M1161.5,945.6 L1162.4,902.8M1165.6,943.8 L1163.1,901.1M1165.6,943.8 L1166.6,903.0M1169.7,944.4 L1167.3,902.3M1169.7,944.4 L1170.8,902.2M1173.8,942.6 L1171.4,901.1M1173.8,942.6 L1174.9,901.8M1177.9,943.2 L1175.6,900.4M1177.9,943.2 L1179.1,902.3M1182.0,941.3 L1179.8,901.9M1182.0,941.3 L1183.3,901.5M1186.1,941.9 L1184.0,901.2M1186.1,941.9 L1187.5,902.3M1190.2,940.1 L1188.2,900.0M1190.2,940.1 L1191.7,902.4M1194.3,940.7 L1192.4,900.7M1194.3,940.7 L1195.9,900.0M1198.4,938.9 L1196.6,899.5M1198.4,938.9 L1200.1,900.0M1202.5,939.5 L1200.8,900.3M1202.5,939.5 L1204.3,901.3M1206.6,937.9 L1205.0,899.7M1206.6,937.9 L1208.5,901.8M1210.7,938.6 L1209.2,899.7M1210.7,938.6 L1212.7,900.3M1214.8,937.1 L1213.4,899.1M1214.8,937.1 L1216.9,901.8M1218.9,938.0 L1217.6,899.1M1218.9,938.0 L1221.1,901.5M1223.0,936.6 L1221.8,899.8M1223.0,936.6 L1225.3,900.4M1227.1,937.7 L1226.0,899.8M1227.1,937.7 L1229.5,899.5" stroke-width="0.95" stroke="url(#g7)"/><path d="M972.0,1045.4Q978.4,1047.6 984.8,1046.2Q991.2,1049.0 997.6,1048.2Q1004.0,1051.6 1010.4,1051.1Q1016.8,1054.5 1023.2,1053.9Q1029.6,1057.1 1036.0,1056.1Q1042.4,1058.7 1048.8,1057.0Q1055.2,1058.9 1061.6,1056.6Q1068.0,1058.2 1074.4,1055.5Q1080.8,1056.7 1087.2,1053.8Q1093.6,1054.9 1100.0,1052.0Q1106.4,1053.2 1112.8,1050.4Q1119.2,1051.9 1125.6,1049.5Q1132.0,1051.3 1138.4,1049.2Q1144.8,1050.9 1151.2,1048.2Q1157.6,1049.3 1164.0,1046.3Q1170.4,1047.0 1176.8,1043.7Q1183.2,1044.4 1189.6,1041.1Q1196.0,1041.9 1202.4,1039.0Q1208.8,1040.2 1215.2,1037.8Q1219.6,1039.0 1224.0,1037.6" stroke-width="1.2"/><path d="M972.0,1045.4 L976.5,1023.7 M984.8,1046.2 L981.3,1024.0M984.8,1046.2 L989.3,1023.3 M997.6,1048.2 L994.1,1022.5M997.6,1048.2 L1002.1,1020.7 M1010.4,1051.1 L1006.9,1022.6M1010.4,1051.1 L1014.9,1020.4 M1023.2,1053.9 L1019.7,1021.8M1023.2,1053.9 L1027.7,1019.1 M1036.0,1056.1 L1032.5,1019.7M1036.0,1056.1 L1040.5,1019.6 M1048.8,1057.0 L1045.3,1017.2M1048.8,1057.0 L1053.3,1017.5 M1061.6,1056.6 L1058.1,1015.7M1061.6,1056.6 L1066.1,1014.9 M1074.4,1055.5 L1070.9,1015.0M1074.4,1055.5 L1078.9,1016.9 M1087.2,1053.8 L1083.7,1016.6M1087.2,1053.8 L1091.7,1015.5 M1100.0,1052.0 L1096.5,1014.3M1100.0,1052.0 L1104.5,1015.4 M1112.8,1050.4 L1109.3,1015.6M1112.8,1050.4 L1117.3,1014.4 M1125.6,1049.5 L1122.1,1014.9M1125.6,1049.5 L1130.1,1015.3 M1138.4,1049.2 L1134.9,1012.7M1138.4,1049.2 L1142.9,1012.9 M1151.2,1048.2 L1147.7,1013.5M1151.2,1048.2 L1155.7,1012.1 M1164.0,1046.3 L1160.5,1012.6M1164.0,1046.3 L1168.5,1012.8 M1176.8,1043.7 L1173.3,1011.4M1176.8,1043.7 L1181.3,1012.0 M1189.6,1041.1 L1186.1,1011.1M1189.6,1041.1 L1194.1,1011.7 M1202.4,1039.0 L1198.9,1010.8M1202.4,1039.0 L1206.9,1011.6 M1215.2,1037.8 L1211.7,1009.7M1215.2,1037.8 L1219.7,1011.5 M1224.0,1037.6 L1220.5,1009.9" stroke-width="1.1" stroke="url(#g8)"/><path d="M976.9,1044.6 L978.9,1024.0 M980.4,1044.6 L977.4,1026.0M989.7,1046.0 L991.7,1023.8 M993.2,1046.0 L990.2,1025.8M1002.5,1048.6 L1004.5,1023.3 M1006.0,1048.6 L1003.0,1025.3M1015.3,1051.5 L1017.3,1022.4 M1018.8,1051.5 L1015.8,1024.4M1028.1,1054.1 L1030.1,1021.2 M1031.6,1054.1 L1028.6,1023.2M1040.9,1055.7 L1042.9,1020.0 M1044.4,1055.7 L1041.4,1022.0M1053.7,1055.9 L1055.7,1018.7 M1057.2,1055.9 L1054.2,1020.7M1066.5,1055.2 L1068.5,1017.7 M1070.0,1055.2 L1067.0,1019.7M1079.3,1053.7 L1081.3,1016.9 M1082.8,1053.7 L1079.8,1018.9M1092.1,1051.9 L1094.1,1016.5 M1095.6,1051.9 L1092.6,1018.5M1104.9,1050.2 L1106.9,1016.4 M1108.4,1050.2 L1105.4,1018.4M1117.7,1048.9 L1119.7,1016.2 M1121.2,1048.9 L1118.2,1018.2M1130.5,1048.3 L1132.5,1015.8 M1134.0,1048.3 L1131.0,1017.8M1143.3,1047.9 L1145.3,1015.2 M1146.8,1047.9 L1143.8,1017.2M1156.1,1046.3 L1158.1,1014.6 M1159.6,1046.3 L1156.6,1016.6M1168.9,1044.0 L1170.9,1014.0 M1172.4,1044.0 L1169.4,1016.0M1181.7,1041.4 L1183.7,1013.4 M1185.2,1041.4 L1182.2,1015.4M1194.5,1038.9 L1196.5,1012.9 M1198.0,1038.9 L1195.0,1014.9M1207.3,1037.2 L1209.3,1012.6 M1210.8,1037.2 L1207.8,1014.6M1218.1,1036.6 L1220.1,1012.5 M1221.6,1036.6 L1218.6,1014.5" stroke-width="1" stroke="url(#g8)" opacity="0.6"/></g></svg>
</body></html>
